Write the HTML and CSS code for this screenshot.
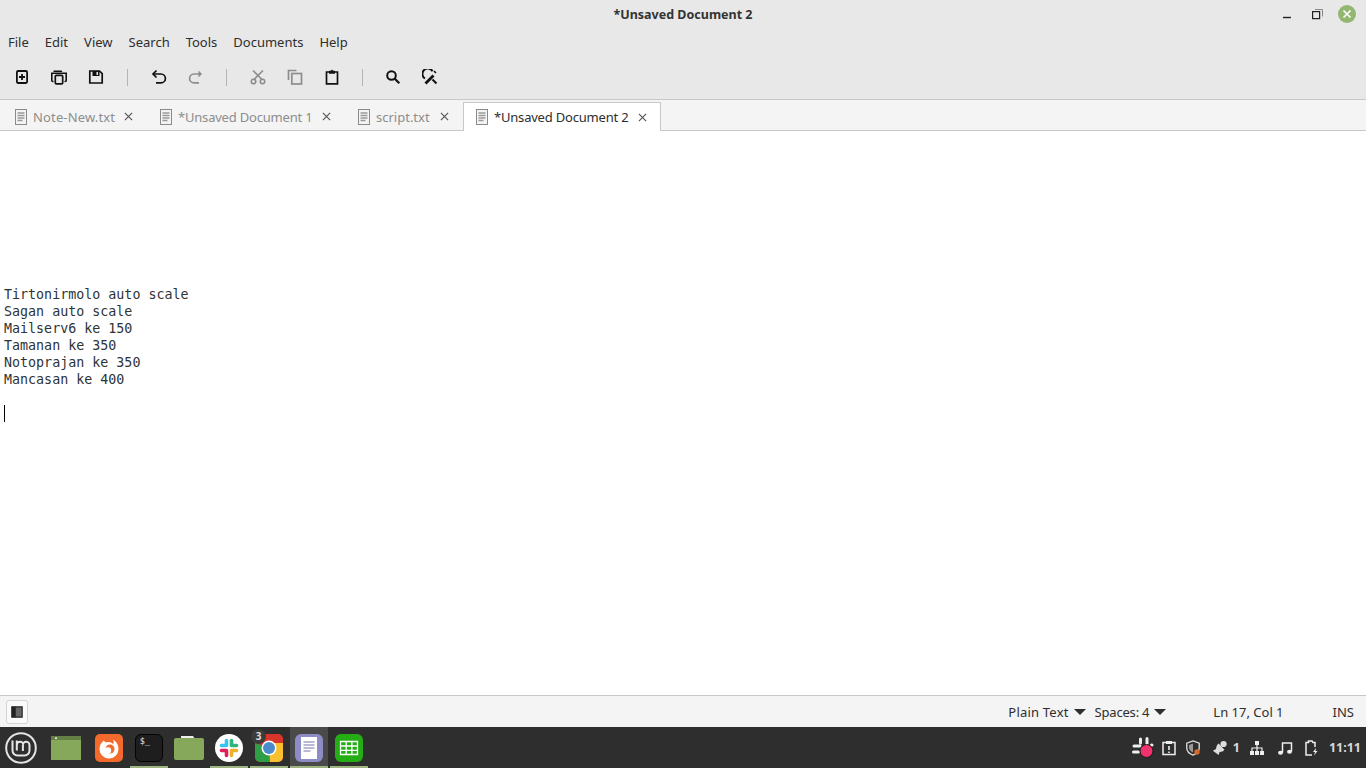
FILE: index.html
```html
<!DOCTYPE html>
<html lang="en">
<head>
  <meta charset="UTF-8" />
  <title>*Unsaved Document 2</title>
  <link rel="stylesheet" href="styles.css">
</head>
<body>
  <div class="window">
    <header class="titlebar">
      <div class="title">*Unsaved Document 2</div>
      <div class="wm-buttons">
        <svg class="wm-btn" viewBox="0 0 16 16"><path d="M3 11.500h8" stroke="#222" stroke-width="1.400" fill="none"/></svg>
        <svg class="wm-btn" viewBox="0 0 16 16"><path d="M6 3.500h7.500v7" stroke="#888" fill="none"/><rect x="3.600" y="5.600" width="7" height="7" stroke="#222" stroke-width="1.200" fill="none"/></svg>
        <svg class="wm-close" viewBox="0 0 18 18"><circle cx="9" cy="9" r="9" fill="#93b670"/><path d="M5.500 5.500l7 7M12.500 5.500l-7 7" stroke="#fff" stroke-width="1.700" fill="none"/></svg>
      </div>
    </header>

    <nav class="menubar">
      <a class="menu-item">File</a>
      <a class="menu-item">Edit</a>
      <a class="menu-item">View</a>
      <a class="menu-item">Search</a>
      <a class="menu-item">Tools</a>
      <a class="menu-item">Documents</a>
      <a class="menu-item">Help</a>
    </nav>

    <div class="toolbar">
      <svg class="tool" viewBox="0 0 16 16"><rect x="2.900" y="2" width="10.200" height="12" rx="1.200" fill="none" stroke="#111" stroke-width="1.800"/><path d="M8 5v6M5 8h6" stroke="#111" stroke-width="1.800"/></svg>
      <svg class="tool" viewBox="0 0 16 16"><path d="M2.500 1.500h8l1 1.500h-9z" fill="#111"/><path d="M2.500 12.500H1.800a1 1 0 0 1-1-1V4.200h14.400v7.300a1 1 0 0 1-1 1h-.7" fill="none" stroke="#111" stroke-width="1.600"/><rect x="4.300" y="6.300" width="7.400" height="8.500" rx="1" fill="#e8e8e8" stroke="#111" stroke-width="1.700"/></svg>
      <svg class="tool" viewBox="0 0 16 16"><path d="M1.800 2h9.700l2.700 2.700V14H1.800z" fill="none" stroke="#111" stroke-width="1.700"/><path d="M4.500 2h7v5h-7z" fill="#111"/><path d="M8.500 3h1.500v3H8.500z" fill="#e8e8e8"/></svg>
      <span class="tool-sep"></span>
      <svg class="tool" viewBox="0 0 16 16"><path d="M5.500 1.500L2 5l3.500 3.500" fill="none" stroke="#111" stroke-width="1.700"/><path d="M2.500 5H10a3.800 3.800 0 0 1 0 8.800H5" fill="none" stroke="#111" stroke-width="1.700"/></svg>
      <svg class="tool" viewBox="0 0 16 16"><path d="M10.500 1.500L14 5l-3.500 3.500z" fill="#8d8d8d"/><path d="M11 5H6a3.800 3.800 0 0 0 0 8.800h5" fill="none" stroke="#8d8d8d" stroke-width="1.700"/></svg>
      <span class="tool-sep tool-sep-wide"></span>
      <svg class="tool" viewBox="0 0 16 16"><g fill="none" stroke="#8d8d8d" stroke-width="1.600"><path d="M3 1.500l9.500 9.500M13 1.500L3.500 11"/><circle cx="3.500" cy="12.500" r="2.200"/><circle cx="12.500" cy="12.500" r="2.200"/></g></svg>
      <svg class="tool" viewBox="0 0 16 16"><g fill="none" stroke="#8d8d8d" stroke-width="1.700"><path d="M1.500 11V1.500h8"/><rect x="4.800" y="4.500" width="9.700" height="10.500"/></g></svg>
      <svg class="tool" viewBox="0 0 16 16"><path d="M5 3H2.500v11.800h11V3H11" fill="none" stroke="#111" stroke-width="1.700"/><path d="M5 1.800h1.800L8 .6l1.200 1.200H11v3H5z" fill="#111"/></svg>
      <span class="tool-sep"></span>
      <svg class="tool" viewBox="0 0 16 16"><circle cx="6.500" cy="6.500" r="4.300" fill="none" stroke="#111" stroke-width="2"/><path d="M9.800 9.800l4.500 4.500" stroke="#111" stroke-width="2.200"/></svg>
      <svg class="tool" viewBox="0 0 16 16"><path d="M10.500 2.200A5.400 5.400 0 1 0 3 9.500" fill="none" stroke="#111" stroke-width="2"/><path d="M2.500 13.500l8-8 2 2-8 8z" fill="#111"/><path d="M10.500 10.500l4 4" stroke="#111" stroke-width="2"/><path d="M12 2l2 2" stroke="#111" stroke-width="1.600"/></svg>
    </div>

    <div class="tabbar">
      <div class="tab tab-note">
        <svg class="tab-icon" viewBox="0 0 12 16"><use href="#doc"/></svg>
        <span class="tab-label">Note-New.txt</span>
        <svg class="tab-close" viewBox="0 0 10 10"><path d="M1 1l8 8M9 1l-8 8"/></svg>
      </div>
      <div class="tab tab-long">
        <svg class="tab-icon" viewBox="0 0 12 16"><use href="#doc"/></svg>
        <span class="tab-label">*Unsaved Document 1</span>
        <svg class="tab-close" viewBox="0 0 10 10"><path d="M1 1l8 8M9 1l-8 8"/></svg>
      </div>
      <div class="tab tab-script">
        <svg class="tab-icon" viewBox="0 0 12 16"><use href="#doc"/></svg>
        <span class="tab-label">script.txt</span>
        <svg class="tab-close" viewBox="0 0 10 10"><path d="M1 1l8 8M9 1l-8 8"/></svg>
      </div>
      <div class="tab tab-long tab-active">
        <svg class="tab-icon" viewBox="0 0 12 16"><use href="#doc"/></svg>
        <span class="tab-label">*Unsaved Document 2</span>
        <svg class="tab-close" viewBox="0 0 10 10"><path d="M1 1l8 8M9 1l-8 8"/></svg>
      </div>
    </div>

    <main class="editor"><pre class="editor-text">









Tirtonirmolo auto scale
Sagan auto scale
Mailserv6 ke 150
Tamanan ke 350
Notoprajan ke 350
Mancasan ke 400

<span class="caret"></span></pre></main>

    <footer class="statusbar">
      <button class="side-toggle"><svg viewBox="0 0 14 14"><rect x="1" y="1" width="12" height="12" fill="#666" stroke="#222" stroke-width="1.400"/><rect x="1" y="1" width="4.500" height="12" fill="#222"/></svg></button>
      <div class="status-right">
        <span class="status-item status-lang">Plain Text<i class="arrow"></i></span>
        <span class="status-item status-spaces">Spaces: 4<i class="arrow"></i></span>
        <span class="status-item status-pos">Ln 17, Col 1</span>
        <span class="status-item status-ins">INS</span>
      </div>
    </footer>
  </div>

  <div class="panel">
    <div class="launchers">
      <svg class="mint" viewBox="0 0 32 32">
        <circle cx="16" cy="16" r="14.800" fill="none" stroke="#e4e4e4" stroke-width="2"/>
        <path d="M7.500 8.500v10a5 5 0 0 0 5 5h7a5 5 0 0 0 5-5v-5.500a3.300 3.300 0 0 0-6.600 0V19M11.800 8.500v10M11.800 13a3.300 3.300 0 0 1 6.600 0" fill="none" stroke="#e4e4e4" stroke-width="2"/>
      </svg>
      <span class="launcher launcher-files">
        <svg viewBox="0 0 30 24"><rect width="30" height="24" fill="#86a85b"/><rect width="30" height="4" fill="#648045"/><rect x="4" y="1.500" width="2" height="1.500" fill="#eee"/></svg>
      </span>
      <span class="launcher">
        <svg viewBox="0 0 28 28"><rect width="28" height="28" rx="5" fill="#f4692c"/><path d="M9 6.500C6 8.500 4.500 11.500 4.500 15a9.500 9.500 0 0 0 19 0c0-4-2-7.500-5.500-9.500 1 2 1 3.500 0 4.500-2-2-5-2.500-7-1.500-.800-.500-1.800-1-2-2z" fill="#fff"/><circle cx="15" cy="15" r="4.500" fill="#f4692c"/><circle cx="13" cy="16.500" r="3.200" fill="#fff"/></svg>
      </span>
      <span class="launcher launcher-run">
        <svg viewBox="0 0 30 30"><rect x=".5" y=".5" width="29" height="29" rx="6" fill="#1e1e1e" stroke="#000"/><text class="term-text" x="5" y="11">$_</text></svg>
      </span>
      <span class="launcher">
        <svg viewBox="0 0 30 24"><path d="M7 0h12l2 3H7z" fill="#eee"/><path d="M0 4a2 2 0 0 1 2-2h26a2 2 0 0 1 2 2v18a2 2 0 0 1-2 2H2a2 2 0 0 1-2-2z" fill="#86a85b"/></svg>
      </span>
      <span class="launcher launcher-run">
        <svg viewBox="0 0 28 28"><circle cx="14" cy="14" r="14" fill="#fff"/><g fill="none" stroke-width="3.600" stroke-linecap="round"><path d="M6.500 16.500h4" stroke="#e01e5a"/><path d="M11.500 21.500v-5" stroke="#e01e5a"/><path d="M11.500 6.500v5" stroke="#36c5f0"/><path d="M6.500 11.500h4" stroke="#36c5f0"/><path d="M21.500 11.500h-4" stroke="#2eb67d"/><path d="M16.500 6.500v5" stroke="#2eb67d"/><path d="M16.500 21.500v-5" stroke="#ecb22e"/><path d="M21.500 16.500h-4" stroke="#ecb22e"/></g></svg>
      </span>
      <span class="launcher launcher-run launcher-badge">
        <svg viewBox="0 0 28 28"><rect width="28" height="28" rx="5" fill="#d8352a"/><path d="M14 14L0 9v14a5 5 0 0 0 5 5h12z" fill="#2f9e44"/><path d="M14 9h14v14a5 5 0 0 1-5 5h-8z" fill="#fbc02d"/><circle cx="14" cy="14" r="7.500" fill="#fff"/><circle cx="14" cy="14" r="6" fill="#4a8ccb"/></svg>
        <span class="badge">3</span>
      </span>
      <span class="launcher launcher-run launcher-active">
        <svg viewBox="0 0 28 28"><rect width="28" height="28" rx="6" fill="#8e8cc4"/><rect x="6" y="3" width="16" height="22" fill="#fff"/><path d="M8.500 8h11M8.500 11h11M8.500 14h11M8.500 17h7" stroke="#7573b0" stroke-width="1.200"/></svg>
      </span>
      <span class="launcher launcher-run">
        <svg viewBox="0 0 28 28"><rect width="28" height="28" rx="6" fill="#24ad14"/><path d="M5.500 7.500h17v13h-17zM5.500 12h17M5.500 16.300h17M11.200 7.500v13M16.900 7.500v13" fill="none" stroke="#fff" stroke-width="1.300"/></svg>
      </span>
    </div>

    <div class="tray">
      <svg class="tray-slack" viewBox="0 0 24 24"><g stroke="#eee" stroke-width="3" stroke-linecap="round" fill="none"><path d="M3 10h6M9.500 3v4M16 2.500v6M2.500 16h5M20.500 9h.500"/></g><circle cx="15.500" cy="15" r="6.500" fill="#f0326e" stroke="#1a1a1a"/></svg>
      <svg class="tray-icon" viewBox="0 0 16 16"><path d="M5 2.500H2v12h12v-12h-3" fill="none" stroke="#eee" stroke-width="1.500"/><path d="M5 1h6v3H5z" fill="#eee"/><path d="M8 6v4M8 11.500v1.500" stroke="#eee" stroke-width="1.600"/></svg>
      <svg class="tray-icon tray-shield" viewBox="0 0 18 18"><path d="M9 1l7 2.500V9c0 4-3 6.500-7 8-4-1.500-7-4-7-8V3.500z" fill="none" stroke="#ddd" stroke-width="1.500"/><path d="M9 4v10c-3-1-4.500-3-4.500-5.500V5.500z" fill="#999"/><circle cx="13.500" cy="13.500" r="3" fill="#d9682c"/></svg>
      <svg class="tray-icon tray-bell" viewBox="0 0 18 18"><path d="M1 12l3.500-2c.500-3 1-4.500 3-6l6.500 7c-1.500 1.800-3 2.500-5.500 2.500l-1 3.500z" fill="#ddd"/><circle cx="13" cy="4.500" r="3.500" fill="#ddd"/></svg>
      <span class="tray-num">1</span>
      <svg class="tray-icon tray-net" viewBox="0 0 16 16"><path d="M6 1h4v4H6zM1 11h4v4H1zM6 11h4v4H6zM11 11h4v4h-4z" fill="#eee"/><path d="M8 5v3M3 11V8h10v3M8 8v3" fill="none" stroke="#eee" stroke-width="1.200"/></svg>
      <svg class="tray-icon tray-music" viewBox="0 0 16 16"><path d="M5.500 12.500V3h9v8.500" fill="none" stroke="#eee" stroke-width="1.500"/><ellipse cx="3.500" cy="12.800" rx="2.500" ry="2" fill="#eee"/><ellipse cx="12.500" cy="11.800" rx="2.500" ry="2" fill="#eee"/></svg>
      <svg class="tray-icon tray-batt" viewBox="0 0 16 16"><path d="M9 15H3V2.500h2.500V1H9l1 1.500h2V7" fill="none" stroke="#eee" stroke-width="1.500"/><path d="M13 8l-3 4h2l-1 3.500 3.500-4.500h-2z" fill="#eee"/></svg>
      <span class="tray-clock">11:11</span>
    </div>
  </div>

  <svg class="defs" width="0" height="0">
    <symbol id="doc" viewBox="0 0 12 16">
      <rect x=".5" y=".5" width="11" height="15" fill="#f4f4f4" stroke="#8a8a8a"/>
      <path d="M2.500 4h7M2.500 6.500h7M2.500 9h7M2.500 11.500h5" stroke="#9a9a9a" stroke-width="1.300"/>
    </symbol>
  </svg>
</body>
</html>
```

FILE: styles.css
```css
* {
  box-sizing: border-box;
}

html, body {
  margin: 0;
  height: 100%;
  overflow: hidden;
}

body {
  display: flex;
  flex-direction: column;
  font-family: "Noto Sans", sans-serif;
  font-size: 13px;
  color: #2e2e2e;
  background: #fff;
}

.window {
  flex: 1;
  display: flex;
  flex-direction: column;
  min-height: 0;
}

/* Title bar */
.titlebar {
  position: relative;
  height: 30px;
  padding-bottom: 2px;
  background: #e8e8e8;
  display: flex;
  align-items: center;
  justify-content: center;
}

.title {
  font-weight: 700;
  font-size: 12.5px;
  color: #333;
}

.wm-buttons {
  position: absolute;
  top: 5px;
  right: 10px;
  display: flex;
  align-items: center;
  gap: 13px;
}

.wm-btn {
  width: 16px;
  height: 16px;
}

.wm-close {
  width: 18px;
  height: 18px;
}

/* Menu */
.menubar {
  height: 25px;
  padding-left: 8px;
  padding-bottom: 2px;
  background: #e8e8e8;
  display: flex;
  align-items: center;
  gap: 16px;
}

.menu-item {
  color: #2e2e2e;
}

/* Toolbar */
.toolbar {
  height: 45px;
  background: #e8e8e8;
  border-bottom: 1px solid #c8c8c8;
  display: flex;
  align-items: center;
  padding-left: 14px;
}

.tool {
  width: 16px;
  height: 16px;
  margin-right: 21px;
}

.tool-sep {
  width: 1px;
  height: 17px;
  background: #b4b4b4;
  margin: 0 22px 0 1px;
}

.tool-sep:first-of-type {
  margin: 0 23px 0 2px;
}

.tool-sep-wide {
  margin: 0 23px 0 1px;
}

/* Tabs */
.tabbar {
  height: 31px;
  background: #f4f4f4;
  border-bottom: 1px solid #c8c8c8;
  display: flex;
  align-items: flex-end;
}

.tab {
  display: flex;
  align-items: center;
  height: 29px;
  margin-bottom: -1px;
  padding: 0 12px 0 15px;
  color: #8d8d8d;
}

.tab-note {
  width: 145px;
}

.tab-note .tab-label {
  letter-spacing: 0.15px;
}

.tab-long {
  width: 198px;
}

.tab-long .tab-label {
  letter-spacing: -0.2px;
}

.tab-script {
  width: 120px;
  padding-right: 14px;
}

.tab-active {
  background: #fff;
  border: 1px solid #c8c8c8;
  border-bottom: none;
  color: #2e2e2e;
  padding: 0 13px 0 12px;
}

.tab-icon {
  width: 12px;
  height: 16px;
  margin-right: 6px;
}

.tab-close {
  width: 9px;
  height: 9px;
  margin-left: auto;
  fill: none;
  stroke: #555;
  stroke-width: 1.300;
}

/* Editor */
.editor {
  flex: 1;
  background: #fff;
  padding-top: 2px;
  min-height: 0;
}

.editor-text {
  margin: 0;
  padding-left: 4px;
  font-family: "DejaVu Sans Mono", monospace;
  font-size: 13.33px;
  line-height: 17px;
  color: #2e3436;
}

.caret {
  display: inline-block;
  width: 1px;
  height: 17px;
  background: #000;
  vertical-align: top;
}

/* Status bar */
.statusbar {
  height: 32px;
  background: #f4f4f4;
  border-top: 1px solid #c8c8c8;
  display: flex;
  align-items: center;
  justify-content: space-between;
  padding-left: 6px;
}

.side-toggle {
  width: 22px;
  height: 24px;
  padding: 0;
  background: #fafafa;
  border: 1px solid #d4d4d4;
  border-radius: 3px;
  display: flex;
  align-items: center;
  justify-content: center;
}

.side-toggle svg {
  width: 12px;
  height: 12px;
}

.status-right {
  display: flex;
  align-items: center;
}

.status-item {
  display: flex;
  align-items: center;
  color: #2e2e2e;
}

.arrow {
  width: 0;
  height: 0;
  margin-left: 5px;
  border-left: 6px solid transparent;
  border-right: 6px solid transparent;
  border-top: 6px solid #2e2e2e;
}

.status-lang {
  letter-spacing: 0.2px;
}

.status-spaces {
  margin-left: 9px;
  letter-spacing: -0.2px;
}

.status-pos {
  margin-left: 47px;
}

.status-ins {
  margin-left: 49px;
  margin-right: 12px;
}

/* Panel */
.panel {
  height: 41px;
  background: #2e2e2e;
  display: flex;
  align-items: center;
  justify-content: space-between;
}

.launchers {
  display: flex;
  align-items: center;
  height: 100%;
  padding-left: 5px;
}

.mint {
  width: 32px;
  height: 32px;
  margin-right: 12px;
}

.launcher {
  position: relative;
  width: 40px;
  height: 100%;
  display: flex;
  align-items: center;
  justify-content: center;
}

.launcher svg {
  width: 30px;
  height: 28px;
}

.launcher-files svg {
  margin-left: -6px;
  height: 24px;
}

.launcher-run::after {
  content: "";
  position: absolute;
  left: 1px;
  right: 1px;
  bottom: 0;
  height: 2px;
  background: #9db380;
}

.launcher-active::before {
  content: "";
  position: absolute;
  left: 1px;
  right: 1px;
  top: 0;
  bottom: 0;
  background: #4a4a4a;
}

.launcher-active svg {
  position: relative;
}

.term-text {
  font-family: "DejaVu Sans Mono", monospace;
  font-size: 9px;
  fill: #eee;
}

.badge {
  position: absolute;
  top: 2px;
  left: 2px;
  width: 15px;
  height: 15px;
  border-radius: 50%;
  background: #3c3c3c;
  color: #ddd;
  font-size: 10px;
  font-weight: 700;
  text-align: center;
  line-height: 15px;
}

.tray {
  display: flex;
  align-items: center;
  padding-right: 5px;
}

.tray-slack {
  width: 24px;
  height: 24px;
  margin-right: 6px;
}

.tray-icon {
  width: 16px;
  height: 16px;
  margin-right: 8px;
}

.tray-shield {
  margin-right: 11px;
}

.tray-bell {
  margin-right: 5px;
}

.tray-net {
  margin-right: 12px;
}

.tray-music {
  margin-right: 10px;
}

.tray-batt {
  margin-right: 7px;
}

.tray-num,
.tray-clock {
  font-weight: 700;
  font-size: 12.5px;
  color: #d8d8d8;
}

.tray-num {
  margin: 0 9px 0 0;
}

.tray-clock {
  margin-left: 3px;
}

.defs {
  position: absolute;
}
```
